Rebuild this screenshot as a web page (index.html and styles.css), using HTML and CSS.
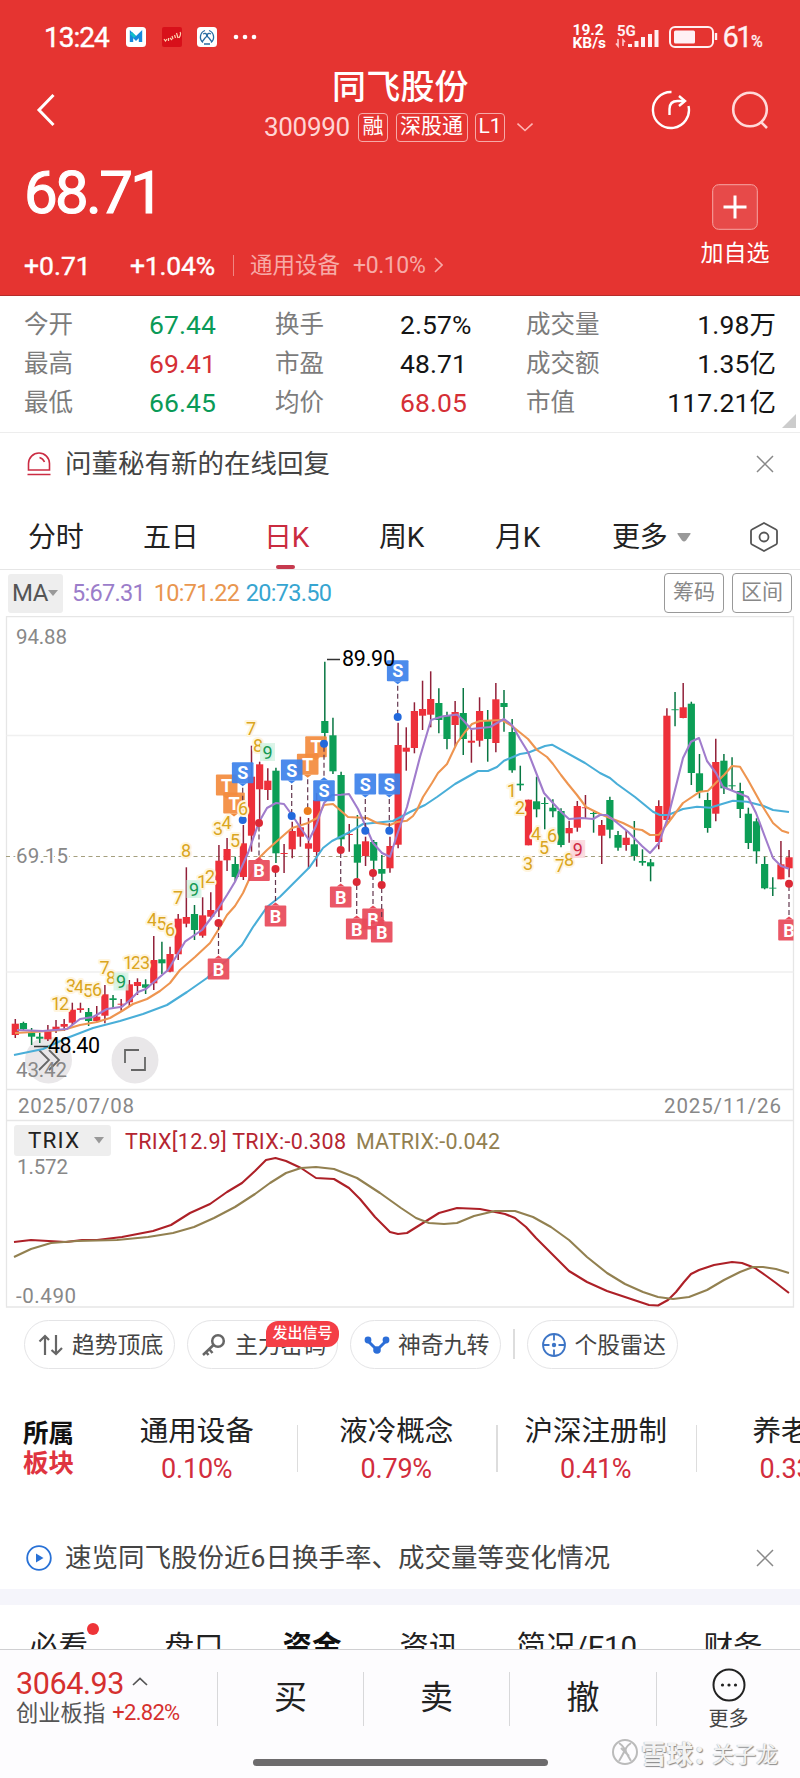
FILE: index.html
```html
<!DOCTYPE html>
<html lang="zh-CN">
<head>
<meta charset="utf-8">
<title>同飞股份 300990</title>
<link rel="stylesheet" href="styles.css">
</head>
<body>
<div class="app">
  <header class="header">
    <div class="status">
      <span class="time">13:24</span>
      <svg class="app-icon" viewBox="0 0 20 20"><rect width="20" height="20" rx="3.5" fill="#fff"/><path d="M5.500 15V7l4.500 4.500L14.500 7v8" fill="none" stroke="#1688dc" stroke-width="3.4"/><path d="M5 6l4 4" stroke="#12c0c8" stroke-width="3"/></svg>
      <svg class="app-icon" viewBox="0 0 20 20"><rect width="20" height="20" rx="2" fill="#d8101a"/><path d="M2 12l1.500 2L5 12m1.500-1v3m1.500-3l2 2m0-4l1 3m1.500-4l1 3m1-5l1.500 5M18 5q1.500 2-1 6" fill="none" stroke="#ffd2ae" stroke-width="1.2"/></svg>
      <svg class="app-icon" viewBox="0 0 20 20"><rect width="20" height="20" rx="3.5" fill="#fff"/><g fill="none" stroke="#286ca2" stroke-width="1.3"><path d="M8 3.500a7 7 0 0 0-2 12M12 3.500a7 7 0 0 1 2 12M6 7c4-2 5 2 2 4l-3 4M14 7c-4-2-5 2-2 4l3 4M7 17h6"/></g></svg>
      <svg class="dots" viewBox="0 0 24 6"><g fill="#fff"><circle cx="3" cy="3" r="2.3"/><circle cx="12" cy="3" r="2.3"/><circle cx="21" cy="3" r="2.3"/></g></svg>
      <span class="speed">19.2<br>KB/s</span>
      <svg class="signal" viewBox="614 20 104 32">
        <text x="616" y="36" class="five-g">5G</text>
        <path d="M617 39v7l-2-2.500M622 46v-6l2 2" fill="none" stroke="#ffc9cd" stroke-width="1.6"/>
        <path d="M627 44h4v3h-4zM633.500 41h4v6h-4zM640 37h4v10h-4zM647 34h4v13h-4zM653.500 30h4v17h-4z" fill="#fff0f2"/>
        <rect x="669" y="27" width="43" height="20" rx="5" fill="none" stroke="#fff0f2" stroke-width="2"/>
        <rect x="673" y="30.500" width="21" height="13" rx="1.500" fill="#fff0f5"/>
        <path d="M715 33v7" stroke="#fff0f2" stroke-width="2.400"/>
      </svg>
      <span class="battery">61<small>%</small></span>
    </div>
    <div class="nav">
      <svg class="back" viewBox="0 0 20 34"><path d="M17.500 2L3 17l14.500 15" fill="none" stroke="#fff" stroke-width="3"/></svg>
      <div class="title">
        <h1>同飞股份</h1>
        <div class="code"><span class="num">300990</span><b>融</b><b class="wide">深股通</b><b>L1</b>
          <svg viewBox="0 0 16 10"><path d="M.5 1.500L8 8.500l7.500-7" fill="none" stroke="#ffb5b3" stroke-width="1.600"/></svg></div>
      </div>
      <svg class="share" viewBox="0 0 40 40"><g fill="none" stroke="#fff" stroke-width="2.400"><path d="M20.500 2A18 18 0 1 0 37.500 16"/><path d="M18.500 25v-6c0-5 3-8 8-8h7"/><path d="M28 6l6 5-6 5"/></g></svg>
      <svg class="search" viewBox="0 0 40 40"><g fill="none" stroke="#ffd9d9" stroke-width="2.600"><circle cx="20" cy="19.500" r="16.800"/><path d="M31 32l6 6"/></g></svg>
    </div>
    <div class="quote">
      <div class="quote-main">
        <div class="price">68.71</div>
        <div class="change"><span class="delta">+0.71</span><span class="pct">+1.04%</span><i></i><span class="ind">通用设备</span><span class="ind-pct">+0.10%</span>
          <svg viewBox="0 0 9 16"><path d="M1 1l7 7-7 7" fill="none" stroke="#f7aaa7" stroke-width="1.600"/></svg></div>
      </div>
      <div class="add"><svg viewBox="0 0 46 46"><rect x=".7" y=".7" width="44.600" height="44.600" rx="6" fill="#e74a49" stroke="#f6a7a4"/><path d="M23 11.500v23M11.500 23h23" stroke="#fff" stroke-width="3"/></svg><span>加自选</span></div>
    </div>
  </header>

  <section class="stats">
    <span>今开</span><b class="down">67.44</b><span>换手</span><b>2.57%</b><span>成交量</span><b class="end">1.98万</b>
    <span>最高</span><b class="up">69.41</b><span>市盈</span><b>48.71</b><span>成交额</span><b class="end">1.35亿</b>
    <span>最低</span><b class="down">66.45</b><span>均价</span><b class="up">68.05</b><span>市值</span><b class="end">117.21亿</b>
    <i class="corner"></i>
  </section>

  <section class="notice">
    <svg class="notice-icon" viewBox="0 0 26 26"><g fill="none" stroke="#cb2c43" stroke-width="1.600"><path d="M2.500 19V12.500a10.500 10.500 0 0 1 21 0V19zM1.500 23.500h23M13.500 6.500q3.500 1 5 4.500"/></g></svg>
    <span>问董秘有新的在线回复</span>
    <svg class="close" viewBox="0 0 18 18"><path d="M1 1l16 16M17 1L1 17" stroke="#888" stroke-width="1.500"/></svg>
  </section>

  <nav class="periods">
    <span>分时</span><span>五日</span><span class="active">日K</span><span>周K</span><span>月K</span><span>更多</span>
    <svg class="caret" viewBox="0 0 14 9"><path d="M1 0h12q1 0 .5 1L9 7.500q-2 2-4 0L.5 1Q0 0 1 0z" fill="#999"/></svg>
    <svg class="hex" viewBox="0 0 30 32"><g fill="none" stroke="#555" stroke-width="1.800"><path d="M15 2l12 6.500q1 .5 1 1.500v12q0 1-1 1.500L15 30 3 23.500Q2 23 2 22V10q0-1 1-1.500z"/><circle cx="15" cy="16" r="4.500"/></g></svg>
  </nav>

  <section class="ma">
    <span class="ma-select">MA<svg viewBox="0 0 10 7"><path d="M0 0h10L5 6z" fill="#999"/></svg></span>
    <span class="ma5">5:67.31</span><span class="ma10">10:71.22</span><span class="ma20">20:73.50</span>
    <span class="btn">筹码</span><span class="btn">区间</span>
  </section>

  <svg class="chart" id="chart" viewBox="0 616 800 692" width="800" height="692">
    <defs><clipPath id="plot"><rect x="6" y="616" width="787.500" height="692"/></clipPath></defs>
    <g fill="none" stroke="#e6e6e6" stroke-width="1.300">
      <path d="M6.500 616.600h787V1307H6.500zM6.500 1089.500h787M6.500 1120.500h787"/>
      <path d="M6.500 735.500h787M6.500 972h787" stroke="#f0f0f0"/>
    </g>
    <path d="M6 856.500h787" stroke="#a59f7e" stroke-width="1.200" stroke-dasharray="4 3.500"/>
    <g class="buttons">
      <circle cx="48.500" cy="1060" r="23.500"/><circle cx="135" cy="1060" r="23.500"/>
      <path d="M39 1050l10 10-10 10M49 1050l10 10-10 10"/>
      <path d="M139 1050h-14v13M131 1070h14v-13" stroke-width="2.200"/>
    </g>
    <g class="axis">
      <text x="16" y="644" textLength="51">94.88</text>
      <text x="16" y="863" textLength="52" class="halo">69.15</text>
      <text x="16" y="1077" textLength="51">43.42</text>
      <text x="18" y="1113" textLength="116">2025/07/08</text>
      <text x="664" y="1113" textLength="117">2025/11/26</text>
      <text x="17" y="1174" textLength="51">1.572</text>
      <text x="16" y="1303" textLength="60">-0.490</text>
    </g>
    <g id="candles"></g>
    <g class="lines">
      <polyline stroke="#49aed8" points="14,1055 43,1049 67,1038 93,1028 120,1021 143,1014 167,1005 187,992 207,978 227,960 242,945 253,927 267,907 280,896.700 295,881.700 310,866.700 323,848 332,841 348,833 363,824 373,823 393,821 410,812 425,805 437,797 455,784 478,771 488,771 497,767 504,760.700 520,754 528,752.700 545,746 552,744.700 585,763 600,773 610,778 617,784 635,797 653,811.700 660,815 668,815 683,809 697,806.700 710,807.700 722,804 733,800.700 747,801.700 763,805.700 773,810 789,812"/>
      <polyline stroke="#ee9550" points="15,1033 33,1032 63,1030 80,1025 97,1022 110,1018 122,1011 133,1004 147,999 160,991 170,983 180,970 195,957 210,943 220,927 227,915 235,906 243,893 252,873 260,857 267,850 276,842 292,828 308,823 317,818 324,805 333,804 348,817 367,818 377,823 390,825 397,822 407,820.700 413,816 417,810 423,797 432,783 438,773 447,764 457,743 465,732 472,724 480,721 502,720 512,726 528,739 537,750 547,757 553,764 561,775 568,784 577,795 586,807 600,814 610,818 623,823 635,829 642,830 650,835 659,834.700 668,823 683,803 700,791.700 708,790.700 717,781.700 724,775 732,766 740,766.700 748,780 763,807 773,823 782,830.700 789,833"/>
      <polyline stroke="#a07ccc" points="17,1030 43,1031 67,1029 80,1019 93,1017 107,1009 122,1006.700 130,1000 138,992 146,989 153,982.700 168,970 185,941.700 202,930 218,909 227,895 235,881.700 248,853 259,822 267,808 276,803 284,804 292,815 300,827 309,840 316,826 324,803 332,795 341,794.700 349,794 358,809 366,827 373,843 382,853 390,856.700 398,832 407,807 420,757 431,720 442,716.500 457,714.500 463,720 471,729 490,727 504,719 512,725 520,739 528,752 537,775 544,793 552,802 562,812.700 569,819 582,818 593,819 600,815 607,815 617,822.700 628,831.700 642,846 650,853 659,843 668,817 675,790 683,758 691,741.700 699,738 707,761 716,773 723,787 738,793 748,797 756,813 765,837 773,858 781,866 789,868.700"/>
      <polyline stroke="#ad2027" points="14,1242 31,1240 66,1242 82,1240 97,1240 122,1237 153,1231 171,1225 190,1213 210,1204 227,1192 242,1183 255,1171 266,1160 275.500,1158 286,1161 301,1168 316,1178 334,1179 349,1188 360,1199 375,1217 390,1232 398,1234 407,1233 423,1223 439,1213 457,1208 480,1209 505,1214 515,1218 526,1227 536,1238 551,1253 569,1271 587,1282 607,1291 625,1297 649,1305 658,1305.500 668,1300 676,1292 684,1282 691,1274 699,1270 714,1265 732,1262 742,1263 755,1268 765,1275 776,1283 789,1293"/>
      <polyline stroke="#928050" points="14,1257 31,1249 51,1243 77,1241 117,1240 148,1237 173,1233 194,1227 214,1218 235,1207 255,1194 270,1183 286,1173 301,1168 316,1167 334,1169 357,1178 380,1193 401,1208 416,1218 429,1223 444,1224 457,1223 474,1216 495,1211 515,1211 533,1217 551,1227 569,1240 587,1257 607,1273 625,1284 643,1292 658,1297 673,1299 689,1297 707,1290 724,1280 740,1272 753,1267 763,1267 776,1269 789,1273"/>
    </g>
    <g id="markers" clip-path="url(#plot)"></g>
    <g class="extreme"><path d="M327 659.500h13M34 1046.500h14"/><text x="342" y="666" textLength="53">89.90</text><text x="48" y="1052.500" textLength="52">48.40</text></g>
    <rect x="14" y="1125" width="97" height="31" rx="3" fill="#eee"/>
    <text x="28" y="1148" textLength="51" class="trix-name">TRIX</text><path d="M94 1137h10l-5 6.500z" fill="#999"/>
    <text x="125" y="1149" textLength="221" class="trix" fill="#b52531">TRIX[12.9] TRIX:-0.308</text>
    <text x="356" y="1149" textLength="144" class="trix" fill="#928050">MATRIX:-0.042</text>
  </svg>

  <section class="tools">
    <span class="pill"><svg viewBox="0 0 26 24"><path d="M7 22V3M1.500 8.500L7 3l4 4M18 2v19M13.500 17l4.500 4 6-6" fill="none" stroke="#666" stroke-width="2.200"/></svg><span>趋势顶底</span></span>
    <span class="pill"><svg viewBox="0 0 26 24"><g fill="none" stroke="#666" stroke-width="2.500"><circle cx="17" cy="8" r="5.800"/><path d="M12.500 12L2 22M8 16l3.500 4M4.500 18.500l3 3.500"/></g></svg><span>主力密码</span><em>发出信号</em></span>
    <span class="pill"><svg viewBox="0 0 26 24"><path d="M4 8l9 9 9-9" fill="none" stroke="#2c6ed8" stroke-width="3"/><g fill="#2c6ed8"><circle cx="4" cy="7" r="3.400"/><circle cx="13" cy="17" r="3.800"/><circle cx="22" cy="7" r="3.400"/></g></svg><span>神奇九转</span></span>
    <i></i>
    <span class="pill"><svg viewBox="0 0 26 24"><g fill="none" stroke="#3d75c6" stroke-width="1.800"><circle cx="13" cy="12" r="11"/><path d="M13 1v6.500M13 16.500V23M2 12h6.500M17.500 12H24"/></g><circle cx="13" cy="12" r="2.200" fill="#3d75c6"/></svg><span>个股雷达</span></span>
  </section>

  <section class="sectors">
    <div class="sector-head">所属<span>板块</span></div>
    <div class="sector"><span>通用设备</span><b>0.10%</b></div>
    <div class="sector"><span>液冷概念</span><b>0.79%</b></div>
    <div class="sector"><span>沪深注册制</span><b>0.41%</b></div>
    <div class="sector"><span>养老金</span><b>0.33%</b></div>
  </section>

  <section class="notice brief">
    <svg class="notice-icon" viewBox="0 0 26 26"><circle cx="13" cy="13" r="11.800" fill="none" stroke="#2871d6" stroke-width="1.800"/><path d="M10 8.500l7.500 4.500-7.500 4.500z" fill="#2871d6"/></svg>
    <span>速览同飞股份近6日换手率、成交量等变化情况</span>
    <svg class="close" viewBox="0 0 18 18"><path d="M1 1l16 16M17 1L1 17" stroke="#888" stroke-width="1.500"/></svg>
  </section>

  <nav class="sections">
    <span class="dot">必看</span><span>盘口</span><span class="strong">资金</span><span>资讯</span><span class="num">简况/F10</span><span>财务</span>
  </nav>

  <footer class="footer">
    <div class="trade">
      <div class="index"><div class="index-value">3064.93<svg viewBox="0 0 16 9"><path d="M1 8l7-6.500L15 8" fill="none" stroke="#555" stroke-width="1.700"/></svg></div><div class="index-name">创业板指<b>+2.82%</b></div></div>
      <span>买</span><span>卖</span><span>撤</span>
      <div class="more"><svg viewBox="0 0 34 34"><circle cx="17" cy="17" r="15.500" fill="none" stroke="#222" stroke-width="2"/><g fill="#222"><circle cx="10.500" cy="17" r="1.600"/><circle cx="17" cy="17" r="1.600"/><circle cx="23.500" cy="17" r="1.600"/></g></svg>更多</div>
    </div>
    <div class="home"><i></i>
      <span class="author"><svg viewBox="0 0 28 28"><g fill="none" stroke="#bbb" stroke-width="2"><circle cx="14" cy="14" r="12"/><path d="M8 5q7 5 5 9t-5 9M20 5q-7 5-5 9t5 9M10 10l8 8"/></g></svg>雪球：<small>关子龙</small></span>
    </div>
  </footer>
</div>
<script src="chart.js"></script>
</body>
</html>
```
FILE: styles.css
```css
* { box-sizing: border-box; }
body {
  margin: 0;
  background: #fff;
  color: #222;
  font-family: Roboto, "Noto Sans CJK SC", sans-serif;
}
.app { width: 800px; height: 1778px; overflow: hidden; display: flex; flex-direction: column; background: #fff; }
.app > * { flex: none; }
svg { display: block; flex: none; }
i, em { font-style: normal; }

/* header */
.header { height: 296px; background: #e53431; color: #fff; border-bottom: 1px solid #b52c2a; }
.status { height: 74px; display: flex; align-items: center; padding-left: 44px; }
.time { width: 82px; font-size: 28px; letter-spacing: -1px; -webkit-text-stroke: .4px; }
.app-icon { width: 20px; height: 20px; margin-right: 15.500px; }
.dots { width: 24px; height: 6px; }
.speed { width: 42px; margin-left: 316px; font-size: 15.500px; font-weight: 700; line-height: 13.500px; letter-spacing: 0; }
.signal { width: 104px; height: 32px; margin-top: -2px; }
.five-g { font-size: 15px; font-weight: 700; fill: #fff0f2; }
.battery { margin-left: 4px; font-size: 29px; letter-spacing: -2.500px; color: #fff0f2; white-space: nowrap; -webkit-text-stroke: .3px; }
.battery small { font-size: 16px; margin-left: 1px; }
.nav { height: 78px; display: grid; grid-template-columns: 36px 1fr 41px 38px 40px 30px; align-items: start; }
.back { width: 20px; height: 34px; margin: 19px 0 0; grid-column: 2; grid-row: 1; }
.title { grid-column: 2; grid-row: 1; margin-left: 228px; }
.title h1 { margin: -12px 0 0 68px; font-size: 34px; line-height: 50px; font-weight: 500; letter-spacing: .2px; }
.code { display: flex; align-items: center; height: 30px; }
.code .num { width: 94px; font-size: 26px; letter-spacing: -.3px; color: #ffd5d4; }
.code b { width: 30px; height: 29px; margin-right: 7.500px; border: 1.200px solid #f6aaa8; border-radius: 4px; text-align: center; font-size: 21px; line-height: 25px; font-weight: 400; }
.code .wide { width: 72px; }
.code svg { width: 16px; height: 10px; margin-left: 4px; }
.share { width: 40px; height: 40px; margin-top: 16px; grid-column: 3; }
.search { width: 40px; height: 40px; margin-top: 16px; grid-column: 5; }
.quote { display: flex; padding-left: 24px; }
.quote-main { width: 676px; }
.price { height: 80px; line-height: 82px; font-size: 60px; letter-spacing: -2.700px; -webkit-text-stroke: 1.100px; }
.change { display: flex; align-items: center; height: 30px; margin-top: 18px; white-space: nowrap; }
.delta { width: 106px; font-size: 26.500px; -webkit-text-stroke: .4px; }
.pct { width: 103px; font-size: 26.500px; -webkit-text-stroke: .4px; letter-spacing: -.2px; }
.change i { width: 1px; height: 21px; background: #f08582; }
.ind { margin: -4px 0 0 16px; width: 103px; font-size: 22.500px; color: #f7aaa7; }
.ind-pct { width: 81px; font-size: 23px; color: #f7aaa7; letter-spacing: -.4px; }
.change svg { width: 9px; height: 16px; }
.add { width: 70px; padding-top: 32px; display: flex; flex-direction: column; align-items: center; }
.add svg { width: 46px; height: 46px; }
.add span { font-size: 23px; line-height: 34px; margin-top: 7px; white-space: nowrap; }

/* key figures */
.stats { position: relative; height: 137px; padding: 9px 24px 0 24px; border-bottom: 1.500px solid #ededed; display: grid; grid-template-columns: 125px 126px 125px 126px 90px 1fr; grid-auto-rows: 39px; line-height: 39px; white-space: nowrap; }
.stats span { font-size: 24.500px; color: #7c7c7c; }
.stats b { font-size: 26.500px; font-weight: 400; letter-spacing: .1px; color: #151515; }
.stats .end { text-align: right; }
.stats .up { color: #d52f36; }
.stats .down { color: #0a9a57; }
.corner { position: absolute; right: 4px; bottom: 4px; border: 7.500px solid; border-color: transparent #ccc #ccc transparent; }

/* message strips */
.notice { height: 63px; display: flex; align-items: center; padding: 0 26px; }
.notice-icon { width: 26px; height: 26px; margin-top: -2px; }
.notice span { flex: 1; margin: -6px 0 0 13px; font-size: 26.500px; color: #444; white-space: nowrap; }
.close { width: 18px; height: 18px; margin-top: -2px; }

/* chart periods */
.periods { height: 74px; padding: 4px 24px 0 28px; border-bottom: 1.500px solid #e6e6e6; display: grid; grid-template-columns: 115px 121px 115px 116px 117px 65px 72px 1fr; align-items: center; font-size: 28px; letter-spacing: -.3px; color: #222; }
.periods .active { position: relative; color: #ca2b3f; }
.periods .active::after { content: ""; position: absolute; left: 12px; top: 50px; width: 19px; height: 4px; border-radius: 2px; background: #c63a4e; }
.caret { width: 14px; height: 9px; margin-top: 5px; }
.hex { width: 30px; height: 32px; justify-self: end; margin-top: 4px; }

/* moving averages */
.ma { height: 46px; display: flex; align-items: center; padding: 0 8px; white-space: nowrap; font-size: 23.500px; letter-spacing: -.7px; }
.ma-select { width: 55px; height: 39px; margin-right: 9px; padding-left: 4px; display: flex; align-items: center; border-radius: 3px; background: #eee; color: #555; font-size: 24px; letter-spacing: -.5px; }
.ma-select svg { width: 10px; height: 7px; }
.ma5 { width: 82px; color: #9b7dca; }
.ma10 { width: 92px; color: #e9964f; }
.ma20 { width: 419px; color: #37a5d1; }
.btn { width: 60px; height: 40px; margin-right: 8px; border: 1.200px solid #999; border-radius: 4px; color: #888; font-size: 21px; line-height: 36px; text-align: center; flex: none; letter-spacing: 0; }
.btn:last-child { margin-right: 0; }

/* candlestick and TRIX panels */
.axis text { font-size: 20.500px; fill: #888; }
.axis .halo { stroke: #fff; stroke-width: 4px; paint-order: stroke; }
.lines { fill: none; stroke-width: 2.100px; stroke-linejoin: round; }
.buttons { fill: #e9e7e9; stroke: none; }
.buttons path { fill: none; stroke: #666; stroke-width: 1.800px; }
.extreme { font-size: 21.500px; fill: #000; }
.extreme path { stroke: #333; stroke-width: 1.300px; }
.trix-name { font-size: 22.500px; fill: #222; }
.trix { font-size: 21.500px; }
.badge { font-size: 18px; font-weight: 700; fill: #fff; text-anchor: middle; }
.count { font-size: 18px; text-anchor: middle; stroke-width: 4px; paint-order: stroke; stroke-linejoin: round; }

/* shortcuts */
.tools { height: 82px; padding: 12px 0 0 24px; display: flex; align-items: flex-start; }
.pill { position: relative; width: 151px; height: 49px; margin-right: 12px; padding-left: 13px; border: 1.200px solid #e4e4e6; border-radius: 25px; display: flex; align-items: center; gap: 8px; font-size: 22.800px; color: #444; white-space: nowrap; }
.pill svg { width: 26px; height: 24px; }
.pill span { margin-top: -2px; }
.pill em { position: absolute; left: 78px; top: 0; width: 73px; height: 26px; border-radius: 12px 12px 12px 2px; background: #f43e46; color: #fff; font-size: 15px; font-weight: 500; line-height: 24px; text-align: center; }
.tools i { width: 1.500px; height: 30px; margin: 9px 12px 0 0; background: #ddd; }

/* sectors */
.sectors { height: 120px; display: flex; align-items: center; overflow: hidden; }
.sector-head { width: 97px; flex: none; padding-left: 23px; display: flex; flex-direction: column; font-size: 25.500px; line-height: 30px; font-weight: 700; color: #111; margin-top: -4px; }
.sector-head span { color: #df3440; }
.sector { position: relative; width: 199.500px; flex: none; display: flex; flex-direction: column; align-items: center; margin-top: 0; }
.sector + .sector::before { content: ""; position: absolute; left: 0; top: 12px; width: 1.500px; height: 47px; background: #ddd; }
.sector span { font-size: 28.500px; line-height: 38px; color: #222; white-space: nowrap; }
.sector b { font-size: 27px; line-height: 37px; font-weight: 400; letter-spacing: -.2px; color: #d22d3d; }
.brief { height: 79px; padding-top: 18px; }

/* lower tabs */
.sections { height: 44px; margin-top: 16px; padding: 20px 0 0 29px; overflow: hidden; display: grid; grid-template-columns: 135.500px 118px 117px 117px 187px 1fr; font-size: 29.500px; line-height: 44px; white-space: nowrap; color: #222; box-shadow: 0 -16px #f5f5fb; }
.sections .strong { font-weight: 700; color: #111; }
.dot { position: relative; }
.dot::after { content: ""; position: absolute; left: 58px; top: -2px; width: 12px; height: 12px; border-radius: 50%; background: #ee3438; }

/* trading bar */
.footer { height: 129px; border-top: 1.500px solid #d0d0d2; background: #fdfcfe; }
.trade { height: 93px; display: grid; grid-template-columns: 217px 146px 146px 147px 144px; padding-top: 22px; }
.trade > span { height: 54px; border-left: 1.300px solid #d8d8da; font-size: 33px; line-height: 52px; text-align: center; }
.index { padding-left: 16px; margin-top: -8px; white-space: nowrap; }
.index-value { display: flex; align-items: center; height: 38px; font-size: 30.500px; letter-spacing: -.4px; color: #d5302f; }
.index-value svg { width: 16px; height: 9px; margin: -4px 0 0 8px; }
.index-name { display: flex; align-items: center; height: 18px; font-size: 22.300px; color: #555; }
.index-name b { margin: 2px 0 0 7px; font-size: 22px; font-weight: 400; letter-spacing: -.7px; color: #d5302f; }
.more { height: 54px; border-left: 1.300px solid #d8d8da; display: flex; flex-direction: column; align-items: center; font-size: 20px; line-height: 34px; color: #444; }
.more svg { width: 34px; height: 34px; margin-top: -4px; }
.home { position: relative; height: 34px; display: flex; justify-content: center; align-items: center; }
.home i { width: 295px; height: 7px; border-radius: 4px; background: #6d6b6d; margin-top: 4px; }
.author { position: absolute; right: 22px; top: -7px; display: flex; align-items: center; height: 32px; font-size: 26px; font-weight: 700; color: #f3f3f3; text-shadow: 1px 1px 1px #888, -.5px -.5px 1px #bbb; white-space: nowrap; }
.author svg { width: 28px; height: 28px; margin-right: 2px; }
.author small { font-size: 22px; font-weight: 400; margin-left: -7px; }
```
FILE: chart.js
```js
// Each candle: direction (r = rise, g = fall), high, body top, body bottom, low.
const candles = `r 1019 1023.7 1035 1038|g 1021.7 1023 1029 1031|g 1028 1032.7 1036.7 1045|g 1032.7 1036.7 1038.7 1043|r 1025 1030.7 1039.3 1041|r 1020 1026.7 1030.7 1033|r 1019 1024 1026.7 1031|r 1002.7 1009.7 1022.7 1025|r 1002.7 1008.3 1010 1012.7|g 1008 1012 1021 1026|r 1006 1016.7 1021 1021.7|r 985 994.3 1015.7 1023.3|g 995 998.3 1000 1009|r 999 1003.7 1004.7 1010.7|r 980 984.3 1002.3 1006|r 978.3 982 986 995|g 979.3 984.3 987.7 994|r 936 960 983.3 990|g 941.7 959.3 963.3 974|r 946.7 954 971.7 972.3|r 914 918.7 954.3 960|r 867.3 917 923.7 927.3|g 905 914 930 940|r 897.3 915.3 935.7 937.7|r 892.3 910 916.7 919.3|r 845 860.7 910.3 917|r 838 849 860.3 871|g 856.7 864 877 881.7|r 825 843.3 877 880|r 745.7 776.7 835.7 851.7|r 761.7 764.3 789.3 820|r 768.3 780.7 790 800|g 767.7 770.7 853.3 863|r 844 853 854 873|r 821.7 831 849.3 858.3|r 816.7 827.3 836.7 846.7|r 818 843.3 848.7 869|r 793 800 852 866.7|g 661.7 721 733 740|g 717.7 735.3 771.3 774|g 771.7 775 839.3 846|r 824 834 835 851.7|g 815 844.3 862.7 878.3|r 836.7 841.3 856 866|g 840 842 860.7 870|g 855 869 873.7 881.7|r 836.7 846 868.3 872.7|r 722.7 745 844.7 848.3|r 727.3 747.7 751.7 770.7|r 702.3 711 748 753.3|r 680.7 709 715.7 730|r 671.3 699 714.7 727.3|g 688.3 703 720 733.3|g 711.7 715.7 739 749.3|r 701 712 725 746.7|g 688 713 739 755|r 730 740.7 742.7 762.7|r 697.3 711 740.7 746.7|g 710 720 739 761.7|r 683 699.3 743 752.3|g 690 703 707 731.7|g 719 732 770.3 772.7|g 765.7 783.7 785.3 790.7|r 799.7 799.7 845.3 845.3|g 776.7 801.3 809.3 817.3|g 797.3 803 804 829.3|g 799.3 807.7 811.3 817.3|g 808.3 811 845 847.3|r 820.7 828 833.3 842.7|r 801 806 827.7 831.7|r 795 807.3 808.2 818.3|g 811.7 813 814 832.7|r 820 825 835.7 864|g 796.7 800 829.7 838.3|g 831 835 847.7 850.7|r 830.7 837.7 845 850.7|g 821 844.3 856 860.7|g 849.3 861 862.7 865.7|g 859 862.3 866.3 881.3|r 800.3 806 842 849.3|r 708.3 715.7 820 822.7|g 692 709.3 710.2 726.3|r 683 707.3 718 718.3|g 701.7 703.7 773 785|g 754 773.3 792 798.3|g 792.7 800 828 832.7|r 738.7 762 813.7 821.3|g 754 760.7 788.3 794|g 757.3 785.3 786.3 790.7|g 782.7 791 809 818|g 807.7 813.7 843 849|g 818.3 821.3 851.3 863.7|g 856.7 864 888.3 889.3|g 877.3 887.7 888.6 896|r 841 864.3 879.3 879.3|r 850 857.3 868.3 877.3`.split("|");

const colors = { r: ["#ed303a", "#912039"], g: ["#0c9e56", "#087642"] };
document.getElementById("candles").innerHTML = candles.map((row, i) => {
  const [kind, ...values] = row.split(" ");
  const [high, top, bottom, low] = values.map(Number);
  const x = 15.3 + i * 8.145;
  const [body, wick] = colors[kind];
  return `<path d="M${x} ${high}V${low}" stroke="${wick}" stroke-width="1.5"/>` +
    `<rect x="${x - 3.6}" y="${top}" width="7.2" height="${bottom - top}" fill="${body}"/>`;
}).join("");

// Consecutive-day counts: digit, x, y, optional palette.
const counts = [
  [1, 56, 1003], [2, 64, 1003], [3, 71, 985], [4, 79, 986], [5, 88, 990], [6, 97, 989], [7, 104.5, 967.5],
  [8, 111, 977], [9, 121, 981.5, "g"], [1, 128, 962.5], [2, 136, 962.5], [3, 145, 962.5], [4, 152, 919],
  [5, 161.5, 923], [6, 170, 929], [7, 178, 897], [8, 186, 850], [9, 194, 889, "g"], [1, 202, 881], [2, 210, 876],
  [3, 218, 828], [4, 226.5, 822], [5, 235, 840], [6, 243, 808], [7, 251, 728], [8, 258, 745], [9, 267.5, 752, "g"],
  [1, 511.7, 790], [2, 520, 807], [3, 528, 863], [4, 536, 833], [5, 544, 847], [6, 552, 835], [7, 560, 865],
  [8, 569, 859], [9, 577.7, 849, "r"]
];
const countColors = { y: ["#daa520", "#fff5df"], g: ["#159952", "#d3f2e2"], r: ["#cf2945", "#fbd5d9"] };

// Trade signals: letter, centre x, centre y of badge, y of the dot on the candle.
const signals = [
  ["T", 234, 803], ["T", 226.7, 785], ["S", 242.7, 772.7, 820], ["T", 307.7, 764.3, 811], ["T", 316, 746.7],
  ["S", 291.7, 770, 816], ["S", 324, 790.7, 743.7], ["S", 365.3, 784, 830.7], ["S", 389.3, 784, 830.7],
  ["S", 397.7, 670.7, 717], ["B", 218.5, 969, 923], ["B", 259, 870.5, 823], ["B", 275.5, 916, 869],
  ["B", 340.7, 897, 850], ["B", 356.7, 929, 882], ["B", 373, 919, 873], ["B", 381.7, 932, 885], ["B", 789, 930, 883.7]
];
const signalColors = { B: ["#e84a5a", "#dc2936"], S: ["#3d82eb", "#2369dc"], T: ["#f38c3e", "#eb7d1c"] };

const drawSignal = ([letter, x, y, dot]) => {
  const [fill, dotFill] = signalColors[letter];
  const tip = dot < y ? -1 : 1;
  const line = dot ? `<path d="M${x} ${y + tip * 15}V${dot}" stroke="#62364e" stroke-width="1.2" stroke-dasharray="5 3"/><circle cx="${x}" cy="${dot}" r="4" fill="${dotFill}"/>` : "";
  return line + `<rect x="${x - 10.8}" y="${y - 10.5}" width="21.6" height="21" rx="1" fill="${fill}" opacity=".93"/>` +
    `<path d="M${x - 4} ${y + tip * 10.5}h8l-4 ${tip * 3}z" fill="${fill}"/>` +
    `<text class="badge" x="${x}" y="${y + 6.5}">${letter}</text>`;
};
const drawCount = ([digit, x, y, palette = "y"]) => {
  const [fill, glow] = countColors[palette];
  const box = palette === "y" ? "" : `<rect x="${x - 7.5}" y="${y - 9}" width="15" height="18" fill="${glow}" opacity=".8"/>`;
  return box + `<text class="count" x="${x}" y="${y + 6.5}" fill="${fill}" stroke="${glow}">${digit}</text>`;
};
document.getElementById("markers").innerHTML = signals.map(drawSignal).join("") + counts.map(drawCount).join("");
```
